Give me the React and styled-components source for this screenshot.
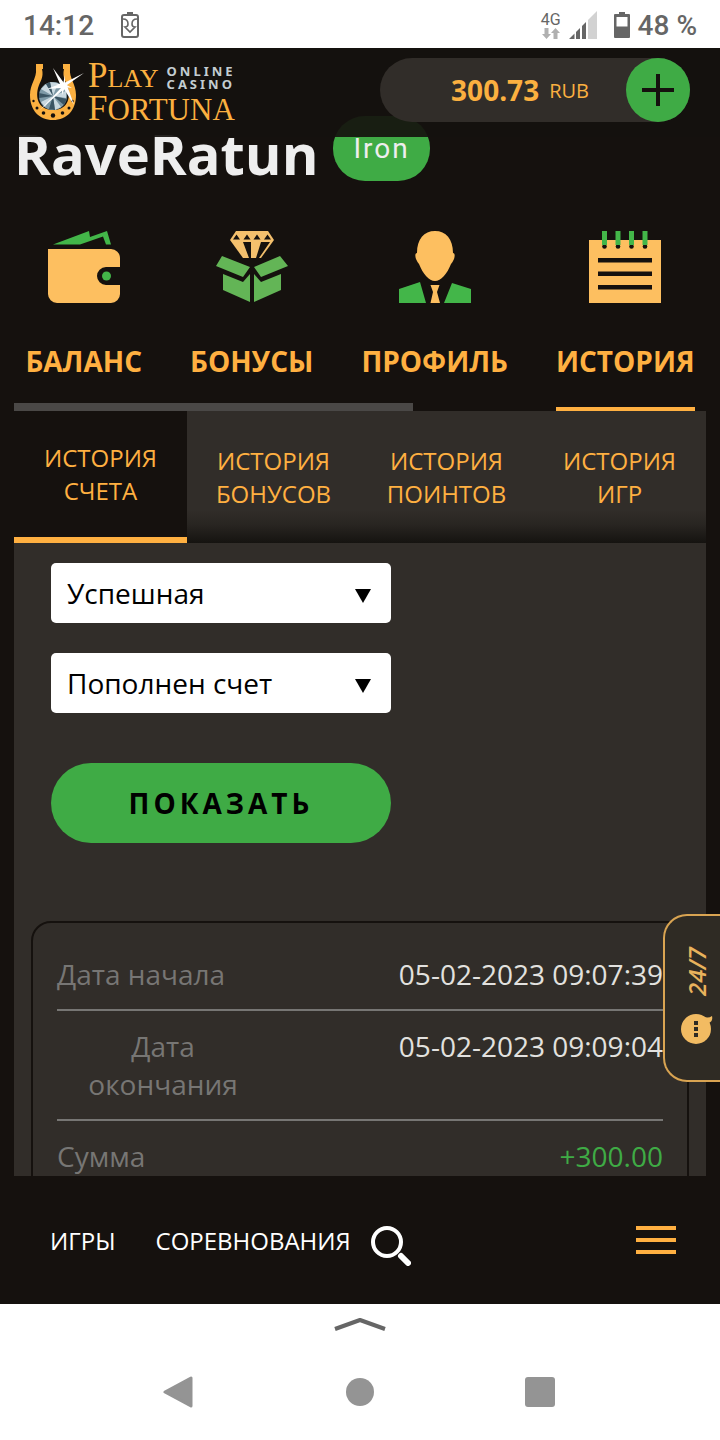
import React from 'react';
import styled, { createGlobalStyle } from 'styled-components';

const GlobalStyle = createGlobalStyle`
  * {
    box-sizing: border-box;
  }
  body {
    margin: 0;
    background: #fff;
    font-family: "Open Sans", "Noto Sans", sans-serif;
  }
  button, select {
    font-family: inherit;
  }
  svg {
    display: block;
    flex: none;
  }
`;

//Device frame
const Screen = styled.div`
  display: flex;
  flex-direction: column;
  height: 100vh;
`;

const StatusBar = styled.div`
  display: flex;
  align-items: center;
  flex: none;
  height: 48px;
  padding: 2px 23px 0;
  color: #666;
  font-family: Roboto, sans-serif;
  font-size: 28px;
  font-weight: 500;
`;

const StatusGroup = styled.div`
  display: flex;
  align-items: center;
  gap: ${({ $gap }) => $gap}px;
  margin-left: ${({ $end }) => ($end ? 'auto' : 0)};
`;

const Network = styled.div`
  display: flex;
  flex-direction: column;
  align-items: center;
  font-size: 16px;
  font-weight: 400;
  line-height: 16px;
`;

const SystemBar = styled.div`
  display: flex;
  flex-direction: column;
  align-items: center;
  flex: none;
  height: 136px;
  padding-top: 13px;
`;

const SystemButtons = styled.div`
  display: grid;
  grid-template-columns: repeat(3, 1fr);
  width: 75%;
  margin-top: 42px;
`;

const SystemButton = styled.button`
  display: flex;
  justify-content: center;
  padding: 0;
  border: none;
  background: none;
`;

//Site
const Site = styled.div`
  position: relative;
  display: flex;
  flex-direction: column;
  flex: 1;
  min-height: 0;
  overflow: hidden;
  background: #15110e;
`;

const Header = styled.header`
  position: absolute;
  top: 0;
  left: 0;
  right: 0;
  z-index: 2;
  display: flex;
  justify-content: space-between;
  height: 89px;
  padding: 10px 30px 0 28px;
  background: rgba(21, 17, 14, .92);
`;

const Logo = styled.a`
  display: flex;
  gap: 4px;
  padding-top: 5px;
  color: #fbb040;
  text-decoration: none;
`;

const LogoText = styled.span`
  display: flex;
  flex-direction: column;
  font-family: "Liberation Serif", serif;
  line-height: 31px;
`;

const LogoLine = styled.span`
  display: flex;
  gap: 8px;
`;

const LogoWord = styled.span`
  display: block;
  height: 31px;
  font-size: ${({ $size }) => $size}px;
  &::first-letter {
    font-size: 35px;
    line-height: 20px;
  }
`;

const LogoTag = styled.span`
  display: block;
  padding-top: 2px;
  color: #c3cdd1;
  font-family: "Noto Sans", sans-serif;
  font-size: 13px;
  font-weight: 700;
  letter-spacing: 3px;
  line-height: 13px;
`;

const Wallet = styled.div`
  display: flex;
  align-items: center;
  justify-content: flex-end;
  width: 310px;
  height: 64px;
  border-radius: 32px;
  background: #312d29;
  color: #fbb040;
`;

const Amount = styled.strong`
  margin-right: 10px;
  font-size: 28px;
`;

const Currency = styled.span`
  margin-right: 37px;
  font-size: 20px;
`;

const AddButton = styled.button`
  display: flex;
  align-items: center;
  justify-content: center;
  width: 64px;
  height: 64px;
  padding: 0;
  border: none;
  border-radius: 50%;
  background: #3fab45;
`;

const Content = styled.main`
  flex: 1;
  min-height: 0;
  overflow: hidden;
  padding: 68px 14px 0;
`;

const UserRow = styled.div`
  display: flex;
  align-items: center;
  gap: 15px;
  height: 65px;
`;

const UserName = styled.h1`
  margin: 0;
  padding-top: 8px;
  color: #eee;
  font-size: 56px;
  line-height: 64px;
`;

const Level = styled.span`
  padding: 0 20px;
  border-radius: 32px;
  background: #3fab45;
  color: #eee;
  font-family: Roboto, sans-serif;
  font-size: 28px;
  letter-spacing: 2px;
  line-height: 65px;
`;

const Sections = styled.nav`
  position: relative;
  display: flex;
  justify-content: center;
  gap: 48px;
  padding-top: 50px;
  &::after {
    content: '';
    position: absolute;
    left: 0;
    bottom: 0;
    width: 399px;
    height: 8px;
    background: #4a4846;
  }
`;

const SectionLink = styled.a`
  display: flex;
  flex-direction: column;
  align-items: center;
  gap: 38px;
  padding-bottom: 26px;
  border-bottom: 4px solid ${({ $active }) => ($active ? '#ffb041' : 'transparent')};
  color: #ffb041;
  font-size: 28px;
  font-weight: 700;
  line-height: 40px;
  text-decoration: none;
`;

const Panel = styled.section`
  background: #312d29;
`;

const Tabs = styled.div`
  display: grid;
  grid-template-columns: repeat(4, 1fr);
  height: 132px;
  background: linear-gradient(to bottom, rgba(21, 19, 16, 0) 75%, rgba(21, 19, 16, .3) 86%, #151310 100%);
`;

const Tab = styled.button`
  padding: 0 24px;
  border: none;
  border-bottom: ${({ $active }) => ($active ? '6px solid #ffb041' : 'none')};
  background: ${({ $active }) => ($active ? '#15110e' : 'none')};
  color: #ffb041;
  font-size: 24px;
  line-height: 33px;
`;

const Filters = styled.form`
  display: flex;
  flex-direction: column;
  gap: 30px;
  width: 340px;
  margin: 20px 37px 78px;
`;

const SelectBox = styled.label`
  position: relative;
  display: block;
  svg {
    position: absolute;
    top: 26px;
    right: 20px;
    pointer-events: none;
  }
`;

const Select = styled.select`
  width: 100%;
  height: 60px;
  padding: 0 48px 0 16px;
  border: none;
  border-radius: 5px;
  appearance: none;
  background: #fff;
  color: #000;
  font-size: 28px;
`;

const ShowButton = styled.button`
  height: 80px;
  margin-top: 20px;
  border: none;
  border-radius: 40px;
  background: #3fab45;
  color: #000;
  font-size: 28px;
  font-weight: 700;
  letter-spacing: 4px;
`;

const Record = styled.dl`
  margin: 0 17px;
  padding: 16px 24px;
  border: 2px solid #15110e;
  border-radius: 20px;
`;

const RecordRow = styled.div`
  display: flex;
  justify-content: space-between;
  padding: 16px 0;
  border-bottom: 2px solid #777674;
  font-size: 28px;
  line-height: 38px;
`;

const RecordLabel = styled.dt`
  max-width: 35%;
  color: #777674;
  text-align: center;
`;

const RecordValue = styled.dd`
  margin: 0;
  color: ${({ $income }) => ($income ? '#3fab45' : '#e2e1df')};
`;

const ChatButton = styled.button`
  position: absolute;
  right: 0;
  bottom: 222px;
  z-index: 2;
  display: flex;
  flex-direction: column;
  align-items: center;
  gap: 16px;
  width: 57px;
  height: 168px;
  padding: 31px 0 0 8px;
  border: 2px solid #d9a452;
  border-right: none;
  border-radius: 24px 0 0 24px;
  background: #2f2b24;
  color: #e8b25c;
`;

const ChatText = styled.span`
  font-size: 24px;
  font-style: italic;
  font-weight: 600;
  line-height: 24px;
  writing-mode: vertical-rl;
  transform: rotate(180deg);
`;

const BottomNav = styled.nav`
  display: flex;
  align-items: center;
  flex: none;
  gap: 40px;
  height: 128px;
  padding: 0 44px 0 50px;
  background: #15110e;
`;

const BottomLink = styled.a`
  color: #fff;
  font-size: 24px;
  text-decoration: none;
`;

const IconButton = styled.button`
  margin-left: ${({ $end }) => ($end ? 'auto' : '-20px')};
  padding: ${({ $end }) => ($end ? 0 : '12px 0 0')};
  border: none;
  background: none;
`;

//Icons
const BatteryCareIcon = () => (
  <svg width="18" height="26" viewBox="0 0 18 26" fill="none" stroke="#666" strokeWidth="2">
    <path d="M6 1h6" />
    <rect x="1" y="3" width="16" height="22" rx="2" />
    <path d="M2 7c3 0 5 2 5 5 0 2-1 3-3 3l5 5 5-5c-2 0-3-1-3-3 0-3 2-5 5-5" strokeWidth="1.600" />
  </svg>
);

const DataArrows = () => (
  <svg width="18" height="11" viewBox="0 0 18 11" fill="#b0b0b0">
    <path d="M2.500 0h4v6H9l-4.500 5L0 6h2.500zM11.500 11h4V5H18l-4.500-5L9 5h2.500z" />
  </svg>
);

const SignalIcon = () => (
  <svg width="28" height="28" viewBox="0 0 28 28">
    <path d="M0 28L5.500 22.500V28z M7 21l4-4v11H7z M13 15l4-4v17h-4z" fill="#666" />
    <path d="M19 9l9-9v28h-9z" fill="#d2d2d2" />
  </svg>
);

const BatteryIcon = () => (
  <svg width="16" height="26" viewBox="0 0 16 26">
    <path d="M5 0h6v2h4a1 1 0 0 1 1 1v22a1 1 0 0 1-1 1H1a1 1 0 0 1-1-1V3a1 1 0 0 1 1-1h4z" fill="#666" />
    <path d="M2.500 5h11v9.500h-11z" fill="#fff" />
  </svg>
);

const HorseshoeIcon = () => (
  <svg width="56" height="60" viewBox="0 0 56 60">
    <path
      d="M8 1h7v5h-1c2 9-2 12-4 19-3 12 2 22 15 22s18-10 15-22c-2-7-6-10-4-19h-1V1h7v5c-1 9 6 15 6 26 0 15-9 25-23 25S2 47 2 32C2 21 9 15 8 6z"
      fill="#fbb040"
    />
    <g fill="#15110e">
      <circle cx="5.500" cy="38" r="1.200" />
      <circle cx="9" cy="45" r="1.500" />
      <circle cx="15.500" cy="50" r="1.800" />
      <circle cx="25" cy="52.500" r="2.200" />
      <circle cx="34.500" cy="50" r="1.800" />
      <circle cx="41" cy="45" r="1.500" />
      <circle cx="44.500" cy="38" r="1.200" />
    </g>
    <circle cx="25" cy="33" r="14" fill="#7d99a6" />
    <path d="M25 33L13 26l5-5zM25 33l-3-14 8 1zM25 33l13-5v7zM25 33l8 11-6 3zM25 33l-8 11-4-5z" fill="#c9d8df" />
    <path d="M25 33l-7-12 4-2zM25 33l14 3-3 6zM25 33l2 14-6-1zM25 33l-14 2v-5z" fill="#3b5563" />
    <path d="M25 5l11 15 20-10-17 12 7 20-10-16L12 47l21-22-14 1 13-5z" fill="#fff" />
    <path d="M37 12v9l7 4-7-1-3 8v-8l-6-3 7 0z" fill="#fff" />
  </svg>
);

const WalletIcon = () => (
  <svg width="72" height="72" viewBox="0 0 72 72">
    <path d="M5 13.500L41 0l1 6 17-6 4 13.500h-5L55 5.500 32 13.500z" fill="#43b649" />
    <path d="M0 18h63a9 9 0 0 1 9 9v9H58a9 9 0 0 0 0 18h14v9a9 9 0 0 1-9 9H9a9 9 0 0 1-9-9z" fill="#fdbf60" />
    <circle cx="58.500" cy="45" r="4.500" fill="#43b649" />
  </svg>
);

const BonusIcon = () => (
  <svg width="72" height="72" viewBox="0 0 72 72">
    <path d="M20 0h32l6 9-13 18H27L14 9z" fill="#f4c06d" />
    <path
      d="M20.500 3.500l3.500 5h-7zM31 3.500l3.500 5h-7zM41 3.500l3.500 5h-7zM51.500 3.500l3.500 5h-7zM27 11h8v16h-2zM45 11h9L43 27h-3z"
      fill="#15110e"
    />
    <path d="M6 25l28 11-7 10L0 35zM64 25L38 36l7 10 27-11zM7 43l20 8 7-8v28L7 59zM65 43l-20 8-7-8v28l27-12z" fill="#63b556" />
  </svg>
);

const ProfileIcon = () => (
  <svg width="72" height="72" viewBox="0 0 72 72">
    <path
      d="M36 0c11 0 18 8 18 22 2 0 2 3 1 6-1 2-2 4-3 5-4 10-10 17-16 17s-12-7-16-17c-1-1-2-3-3-5-1-3-1-6 1-6C18 8 25 0 36 0z"
      fill="#fdbf60"
    />
    <path d="M31.500 54h9L38 61l3 11h-9.500L34 61z" fill="#fdbf60" />
    <path d="M0 58l21-7 6 21H0zM72 58l-19-6-8 20h27z" fill="#43b649" />
  </svg>
);

const HistoryIcon = () => (
  <svg width="72" height="72" viewBox="0 0 72 72">
    <path d="M0 9h72v63H0z" fill="#fdbf60" />
    <path d="M9 27h54v4.500H9zM9 40.500h54V45H9zM9 54h54v4.500H9z" fill="#15110e" />
    {[15.5, 29, 42.5, 56].map((x) => (
      <g key={x}>
        <circle cx={x} cy="15.500" r="2.300" fill="#15110e" />
        <path d={`M${x - 2.5} 0h5v14h-5z`} fill="#43b649" />
      </g>
    ))}
  </svg>
);

const Caret = () => (
  <svg width="16" height="14" viewBox="0 0 16 14">
    <path d="M0 0h16L8 14z" />
  </svg>
);

const ChatIcon = () => (
  <svg width="32" height="34" viewBox="0 0 32 34">
    <circle cx="15" cy="17" r="15" fill="#f2bb62" />
    <path d="M22 4c3 2 6 2 9 0 1 4-1 6-3 7z" fill="#f2bb62" />
    <path d="M13 9h4v4h-4zM13 15h4v4h-4zM13 21h4v4h-4z" fill="#2f2b24" />
  </svg>
);

const SearchIcon = () => (
  <svg width="40" height="40" viewBox="0 0 40 40" fill="none" stroke="#fff">
    <circle cx="16" cy="16" r="14" strokeWidth="4" />
    <path d="M30 30l7 7" strokeWidth="6" strokeLinecap="round" />
  </svg>
);

const MenuIcon = () => (
  <svg width="40" height="28" viewBox="0 0 40 28" fill="#ffb041">
    <path d="M0 0h40v4H0zM0 12h40v4H0zM0 24h40v4H0z" />
  </svg>
);

const sections = [
  { name: 'БАЛАНС', Icon: WalletIcon },
  { name: 'БОНУСЫ', Icon: BonusIcon },
  { name: 'ПРОФИЛЬ', Icon: ProfileIcon },
  { name: 'ИСТОРИЯ', Icon: HistoryIcon, active: true },
];

const tabs = ['ИСТОРИЯ СЧЕТА', 'ИСТОРИЯ БОНУСОВ', 'ИСТОРИЯ ПОИНТОВ', 'ИСТОРИЯ ИГР'];

const record = [
  { label: 'Дата начала', value: '05-02-2023 09:07:39' },
  { label: 'Дата окончания', value: '05-02-2023 09:09:04' },
  { label: 'Сумма', value: '+300.00', income: true },
];

const FilterSelect = ({ label, value }) => (
  <SelectBox>
    <Select aria-label={label} defaultValue={value}>
      <option>{value}</option>
    </Select>
    <Caret />
  </SelectBox>
);

const App = () => {
  return (
    <Screen>
      <GlobalStyle />
      <StatusBar>
        <StatusGroup $gap={27}>
          <span>14:12</span>
          <BatteryCareIcon />
        </StatusGroup>
        <StatusGroup $gap={17} $end>
          <StatusGroup $gap={8}>
            <Network>
              4G
              <DataArrows />
            </Network>
            <SignalIcon />
          </StatusGroup>
          <StatusGroup $gap={8}>
            <BatteryIcon />
            <span>48 %</span>
          </StatusGroup>
        </StatusGroup>
      </StatusBar>

      <Site>
        <Header>
          <Logo href="#">
            <HorseshoeIcon />
            <LogoText>
              <LogoLine>
                <LogoWord $size={26}>PLAY</LogoWord>
                <LogoTag>ONLINE<br />CASINO</LogoTag>
              </LogoLine>
              <LogoWord $size={31}>FORTUNA</LogoWord>
            </LogoText>
          </Logo>
          <Wallet>
            <Amount>300.73</Amount>
            <Currency>RUB</Currency>
            <AddButton aria-label="Пополнить">
              <svg width="32" height="32" viewBox="0 0 32 32" fill="#15110e">
                <path d="M14 0h4v14h14v4H18v14h-4V18H0v-4h14z" />
              </svg>
            </AddButton>
          </Wallet>
        </Header>

        <Content>
          <UserRow>
            <UserName>RaveRatun</UserName>
            <Level>Iron</Level>
          </UserRow>
          <Sections>
            {sections.map(({ name, Icon, active }) => (
              <SectionLink key={name} href="#" $active={active}>
                <Icon />
                {name}
              </SectionLink>
            ))}
          </Sections>
          <Panel>
            <Tabs>
              {tabs.map((tab, i) => (
                <Tab key={tab} $active={i === 0}>{tab}</Tab>
              ))}
            </Tabs>
            <Filters>
              <FilterSelect label="Статус" value="Успешная" />
              <FilterSelect label="Операция" value="Пополнен счет" />
              <ShowButton type="button">ПОКАЗАТЬ</ShowButton>
            </Filters>
            <Record>
              {record.map(({ label, value, income }) => (
                <RecordRow key={label}>
                  <RecordLabel>{label}</RecordLabel>
                  <RecordValue $income={income}>{value}</RecordValue>
                </RecordRow>
              ))}
            </Record>
          </Panel>
        </Content>

        <ChatButton>
          <ChatText>24/7</ChatText>
          <ChatIcon />
        </ChatButton>

        <BottomNav>
          <BottomLink href="#">ИГРЫ</BottomLink>
          <BottomLink href="#">СОРЕВНОВАНИЯ</BottomLink>
          <IconButton aria-label="Поиск"><SearchIcon /></IconButton>
          <IconButton aria-label="Меню" $end><MenuIcon /></IconButton>
        </BottomNav>
      </Site>

      <SystemBar>
        <svg width="52" height="14" viewBox="0 0 52 14" fill="none" stroke="#666" strokeWidth="4">
          <path d="M1 12L26 3l25 9" strokeLinejoin="round" />
        </svg>
        <SystemButtons>
          <SystemButton aria-label="Назад">
            <svg width="34" height="38" viewBox="0 0 34 38">
              <path d="M2 19L28 5v28z" fill="#949494" stroke="#949494" strokeWidth="3" strokeLinejoin="round" />
            </svg>
          </SystemButton>
          <SystemButton aria-label="Домой">
            <svg width="28" height="38" viewBox="0 0 28 38">
              <circle cx="14" cy="19" r="14" fill="#949494" />
            </svg>
          </SystemButton>
          <SystemButton aria-label="Недавние">
            <svg width="30" height="38" viewBox="0 0 30 38">
              <rect y="4" width="30" height="30" rx="3" fill="#949494" />
            </svg>
          </SystemButton>
        </SystemButtons>
      </SystemBar>
    </Screen>
  );
};

export default App;
